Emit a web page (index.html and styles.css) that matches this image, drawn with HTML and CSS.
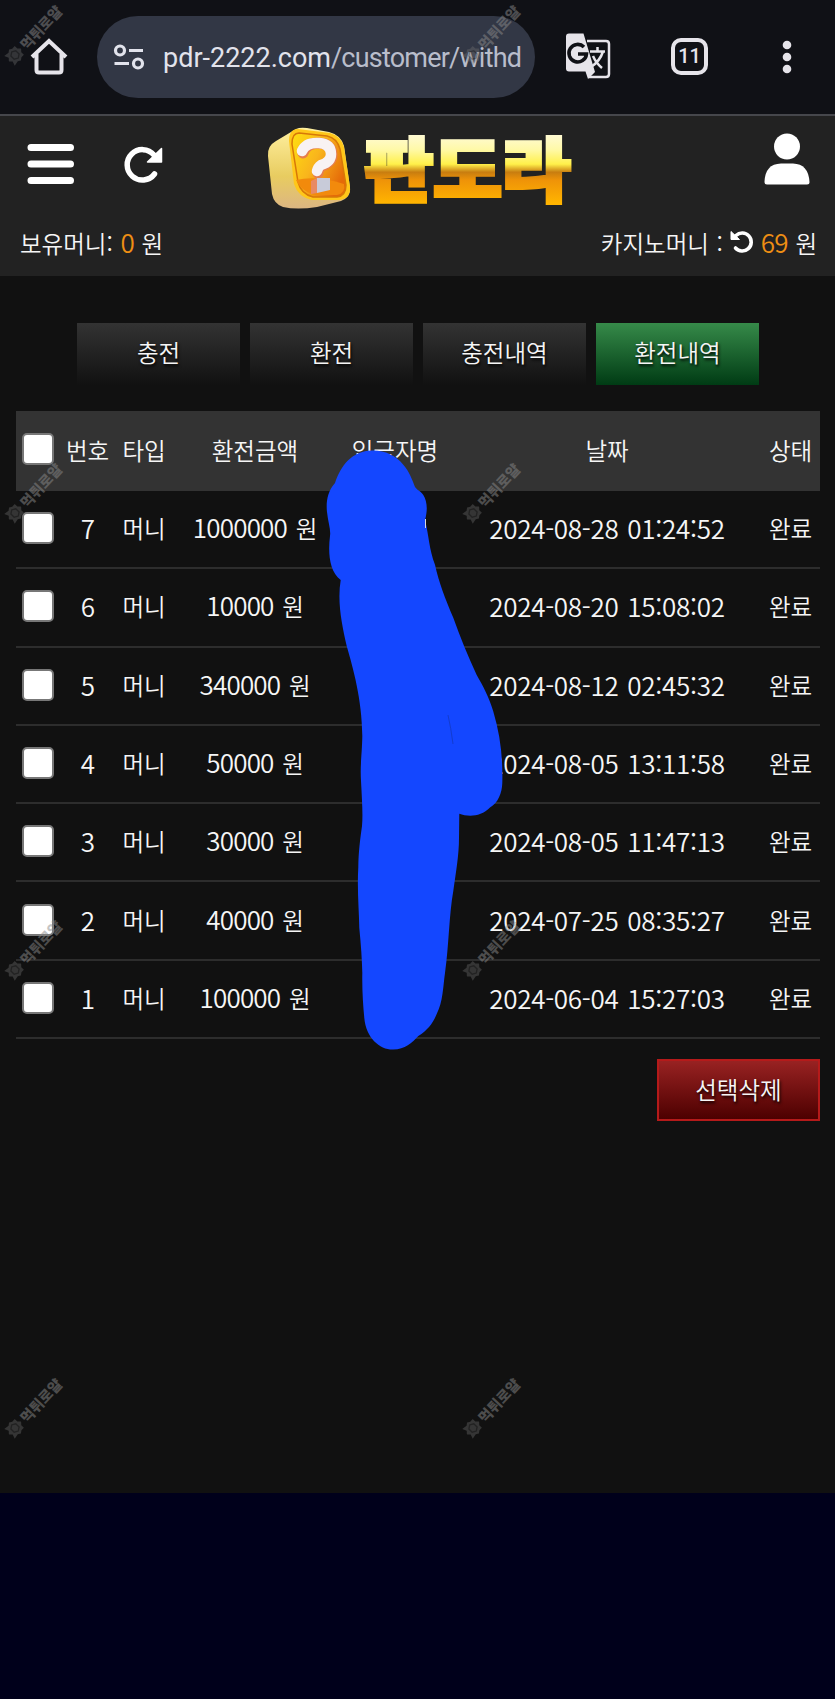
FILE: index.html
```html
<!DOCTYPE html>
<html lang="ko">
<head>
    <meta charset="UTF-8">
    <meta name="viewport" content="width=device-width, initial-scale=1.0">
    <title>환전내역</title>
    <link rel="stylesheet" href="styles.css">
</head>
<body>
    <div class="browser-bar">
        <svg class="home-icon" width="38" height="38" viewBox="0 0 38 38">
            <path d="M2 19 L19 3 L36 19 M6.5 16 V32 Q6.5 34.5 9 34.5 H29 Q31.500 34.5 31.500 32 V16" fill="none" stroke="#e6e4ea" stroke-width="4"/>
        </svg>
        <div class="address">
            <svg width="32" height="28" viewBox="0 0 32 28">
                <g fill="none" stroke="#e2e3ec" stroke-width="3.200">
                    <circle cx="7" cy="7.500" r="4.500"/>
                    <path d="M16 7.500 H30 M1.500 20.500 H16"/>
                    <circle cx="25" cy="20.500" r="4.500"/>
                </g>
            </svg>
            <div class="url">pdr-2222.com<span>/customer/withd</span></div>
        </div>
        <svg class="translate-icon" width="46" height="47" viewBox="0 0 46 47">
            <path d="M22 8 H41 Q44 8 44 11 V41 Q44 44 41 44 H24" fill="none" stroke="#e6e4ea" stroke-width="2.500"/>
            <path d="M25 18.500 H40 M32.500 14 V18.500 M38 18.500 Q35 28 26 34 M28 23 Q31 30 37 35" fill="none" stroke="#e6e4ea" stroke-width="2.500"/>
            <path d="M4 0.500 H18.500 L30 39 L23 46 L20.500 38.500 H4 Q1 38.500 1 35.500 V3.500 Q1 0.500 4 0.500 Z" fill="#e6e4ea"/>
            <path d="M19 14 A8.800 8.800 0 1 0 21.500 21 H13" fill="none" stroke="#101116" stroke-width="3.500"/>
        </svg>
        <div class="tab-count">11</div>
        <svg class="dots-icon" width="10" height="34" viewBox="0 0 10 34">
            <g fill="#e6e4ea">
                <circle cx="5" cy="5" r="4.300"/>
                <circle cx="5" cy="17" r="4.300"/>
                <circle cx="5" cy="29" r="4.300"/>
            </g>
        </svg>
    </div>

    <div class="header">
        <div class="header-top">
            <svg class="menu-icon" width="48" height="42" viewBox="0 0 48 42">
                <path d="M4 4.500 H43.500 M4 21 H43.500 M4 37.500 H43.500" stroke="#fff" stroke-width="7" stroke-linecap="round"/>
            </svg>
            <svg class="reload-icon" width="42" height="42" viewBox="0 0 42 42">
                <path d="M31.500 30 A15.200 15.200 0 1 1 31 11" fill="none" stroke="#fff" stroke-width="5.500" stroke-linecap="round"/>
                <path d="M38.500 4.500 V18 H24.500 Z" fill="#fff" stroke="#fff" stroke-width="1.500" stroke-linejoin="round"/>
            </svg>
            <svg class="logo" width="308" height="88" viewBox="0 0 308 88">
                <defs>
                    <linearGradient id="gold" x1="0" y1="9" x2="0" y2="76" gradientUnits="userSpaceOnUse">
                        <stop offset="0" stop-color="#fffad0"/>
                        <stop offset="0.2" stop-color="#fff9a8"/>
                        <stop offset="0.42" stop-color="#fff04a"/>
                        <stop offset="0.54" stop-color="#c87d10"/>
                        <stop offset="0.66" stop-color="#ef9308"/>
                        <stop offset="1" stop-color="#ffb400"/>
                    </linearGradient>
                    <linearGradient id="side" x1="0" y1="0" x2="0" y2="1">
                        <stop offset="0" stop-color="#fff0a0"/>
                        <stop offset="0.6" stop-color="#e8cc60"/>
                        <stop offset="1" stop-color="#dcb682"/>
                    </linearGradient>
                    <linearGradient id="face" x1="0" y1="0" x2="1" y2="0.6">
                        <stop offset="0" stop-color="#ffdf10"/>
                        <stop offset="0.5" stop-color="#f9b51c"/>
                        <stop offset="1" stop-color="#e56a08"/>
                    </linearGradient>
                </defs>
                <path d="M29 2 Q33 0 40 1 L62 5 Q74 8 77 19 L83 60 Q84 70 74 74 L50 80 Q30 83 16 80 Q7 77 5 67 L1 29 Q0 19 9 14 Z" fill="url(#side)"/>
                <path d="M31 2 L63 6 Q74 9 77 20 L83 60 Q84 72 72 73 L45 73 Q31 70 27 57 L22 14 Q22 2 31 2 Z" fill="#ffc71a"/>
                <path d="M32 6 L60 9 Q70 11 73 22 L79 58 Q79 69 70 70 L46 70 Q34 67 31 55 L25 17 Q25 6 32 6 Z" fill="url(#face)" stroke="#d77808" stroke-width="1.500"/>
                <path d="M29 53 Q50 48 77 57 Q79 66 70 68 L47 68 Q33 63 29 53 Z" fill="#f28a0c"/>
                <path d="M36 26 Q39 16 52 16 Q65 17 65 28 Q65 35 55 39 Q51 41 51 46" fill="none" stroke="#e67e4c" stroke-width="11" stroke-linecap="round"/>
                <path d="M35 24 Q39 15 52 16 Q64 17 64 27 Q64 35 54 38 Q51 40 50 44" fill="none" stroke="#f8f2f3" stroke-width="10.500" stroke-linecap="round"/>
                <path d="M44 54 L50 51 V66 L44 67 Z" fill="#e88a63"/>
                <path d="M50 51 H63 V63 L50 66 Z" fill="#c8cbd9"/>
                <text x="97.500" y="69" textLength="206" lengthAdjust="spacingAndGlyphs" class="logo-text" fill="url(#gold)" stroke="url(#gold)">판도라</text>
            </svg>
            <svg class="user-icon" width="46" height="52" viewBox="0 0 46 52">
                <circle cx="23" cy="13.500" r="13" fill="#fff"/>
                <path d="M0.500 49 Q1 31 17 30.500 H29 Q44.500 31 45.500 49 Q45.500 51.500 43 51.500 H3 Q0.500 51.500 0.500 49 Z" fill="#fff"/>
            </svg>
        </div>
        <div class="money">
            <div>보유머니: <span class="num amount">0</span> 원</div>
            <div class="casino">
                <span>카지노머니 :</span>
                <svg width="24" height="24" viewBox="0 0 24 24">
                    <path d="M6 5.500 A9 9 0 1 1 5.500 18" fill="none" stroke="#fff" stroke-width="3.600" stroke-linecap="round"/>
                    <path d="M1 1.500 V9.500 H9.500 Z" fill="#fff" stroke="#fff" stroke-linejoin="round"/>
                </svg>
                <span><span class="num amount">69</span> 원</span>
            </div>
        </div>
    </div>

    <div class="content">
        <div class="tabs">
            <a class="tab">충전</a>
            <a class="tab">환전</a>
            <a class="tab">충전내역</a>
            <a class="tab active">환전내역</a>
        </div>

        <div class="table-wrap">
            <table class="history">
                <colgroup>
                    <col class="col-check"><col class="col-no"><col class="col-type"><col class="col-amount"><col class="col-name"><col class="col-date"><col class="col-state">
                </colgroup>
                <thead>
                    <tr><th><input type="checkbox"></th><th>번호</th><th>타입</th><th>환전금액</th><th>입금자명</th><th>날짜</th><th>상태</th></tr>
                </thead>
                <tbody>
                    <tr><td><input type="checkbox"></td><td class="num">7</td><td>머니</td><td><span class="num">1000000</span> 원</td><td></td><td class="date">2024-08-28 01:24:52</td><td>완료</td></tr>
                    <tr><td><input type="checkbox"></td><td class="num">6</td><td>머니</td><td><span class="num">10000</span> 원</td><td></td><td class="date">2024-08-20 15:08:02</td><td>완료</td></tr>
                    <tr><td><input type="checkbox"></td><td class="num">5</td><td>머니</td><td><span class="num">340000</span> 원</td><td></td><td class="date">2024-08-12 02:45:32</td><td>완료</td></tr>
                    <tr><td><input type="checkbox"></td><td class="num">4</td><td>머니</td><td><span class="num">50000</span> 원</td><td></td><td class="date">2024-08-05 13:11:58</td><td>완료</td></tr>
                    <tr><td><input type="checkbox"></td><td class="num">3</td><td>머니</td><td><span class="num">30000</span> 원</td><td></td><td class="date">2024-08-05 11:47:13</td><td>완료</td></tr>
                    <tr><td><input type="checkbox"></td><td class="num">2</td><td>머니</td><td><span class="num">40000</span> 원</td><td></td><td class="date">2024-07-25 08:35:27</td><td>완료</td></tr>
                    <tr><td><input type="checkbox"></td><td class="num">1</td><td>머니</td><td><span class="num">100000</span> 원</td><td></td><td class="date">2024-06-04 15:27:03</td><td>완료</td></tr>
                </tbody>
            </table>
            <!-- marker stroke over the depositor names -->
            <svg class="marker" width="180" height="604" viewBox="325 448 180 604">
                <path d="M372 450.400 C352 451 341 465 335 483 C327 492 326 503 327 512 C328 522 331 530 330 536 C328 552 329 571 340.700 580 C337 602 342 625 346.700 646 C353 668 362 699 362.300 736 C362 755 360 765 361 781 C362 800 363 815 362 826 C360 840 358.500 852 358.300 867 C357 890 359 910 359.300 928 C361 945 362 960 362.300 973 C362 990 363 1005 364.300 1018 C366 1038 380 1050 393.300 1049.600 C405 1049 412 1043 418.300 1036 C428 1030 433 1023 436.700 1014 C443 1002 443 987 445 973 C449 945 449 915 453.300 891 C456 872 459 855 459 838 L459.300 813.700 C468 817 481 817 490 807.500 C498 803 502 793 502.300 783 C503 757 500 734 493.300 711.600 C489 697 483 686 476.700 675 C468 656 460 637 453.300 617.800 C445 598 439 583 435 564.700 C429 549 429 536 425 520 C428 509 427 501 423.300 495 C421 491 418 491 415 487 C412 479 409 471 403.300 464.700 C396 455 384 450 372 450.400 Z" fill="#1447ff"/>
                <path d="M448 715 Q451 728 453 744" fill="none" stroke="#133ccf" stroke-width="1"/>
                <path d="M425.500 519 V528" stroke="#d8d8e0" stroke-width="1"/>
            </svg>
        </div>

        <div class="actions">
            <button class="delete-button">선택삭제</button>
        </div>
    </div>

    <div class="bottom-bar"></div>

    <div class="watermarks">
        <div class="mark"></div>
        <div class="mark"></div>
        <div class="mark"></div>
        <div class="mark"></div>
        <div class="mark"></div>
        <div class="mark"></div>
        <div class="mark"></div>
        <div class="mark"></div>
    </div>

    <script>
        var marks = document.querySelectorAll('.mark');
        for (var i = 0; i < marks.length; i++) {
            marks[i].innerHTML = '<div class="mark-inner"><svg width="18" height="18" viewBox="0 0 20 20">' +
                '<path d="M10 1 L13 3 L17 3 L17 7 L20 10 L17 13 L17 17 L13 17 L10 19 L7 17 L1 18 L3 13 L0 10 L3 7 L1 2 L7 3 Z" fill="#777" opacity="0.7"/>' +
                '<path d="M10 5 L14 7.5 V12.5 L10 15 L6 12.5 V7.5 Z" fill="none" stroke="#333" stroke-width="1.5"/>' +
                '</svg><span>먹튀로얄</span></div>';
        }
    </script>
</body>
</html>
```
FILE: styles.css
```css
* {
    box-sizing: border-box;
}

body {
    position: relative;
    display: flex;
    flex-direction: column;
    height: 1699px;
    margin: 0;
    overflow: hidden;
    background-color: #111111;
    color: #f6f6f6;
    font-family: "Noto Sans CJK KR", sans-serif;
    font-size: 23.5px;
    font-weight: 350;
    line-height: 32px;
}

svg {
    display: block;
    flex: none;
}

.browser-bar {
    display: flex;
    align-items: center;
    height: 116px;
    padding: 0 0 1px 30px;
    background-color: #101116;
    border-bottom: 2px solid #46474c;
    color: #e6e4ea;
    font-family: Roboto, sans-serif;
}

.address {
    display: flex;
    align-items: center;
    gap: 18px;
    width: 438px;
    height: 82px;
    margin-left: 29px;
    padding: 0 16px;
    border-radius: 41px;
    background-color: #323745;
}

.url {
    padding-top: 2px;
    white-space: nowrap;
    font-size: 27px;
    font-weight: 400;
    color: #e2e3ec;
}

.url span {
    letter-spacing: -0.8px;
    color: #b9bdcb;
}

.translate-icon {
    margin-left: 30px;
}

.tab-count {
    width: 37px;
    height: 37px;
    margin-left: 60px;
    border: 4px solid #e6e4ea;
    border-radius: 10px;
    font-size: 20px;
    font-weight: 500;
    line-height: 29px;
    text-align: center;
}

.dots-icon {
    margin-left: 74px;
}

.header {
    height: 160px;
    padding: 11px 18px 0 20px;
    background-color: #222222;
}

.header-top {
    display: flex;
    align-items: flex-start;
    height: 98px;
}

.menu-icon {
    margin: 16px 0 0 7px;
}

.reload-icon {
    margin: 17px 0 0 48px;
}

.logo {
    margin-left: 102px;
    overflow: visible;
}

.logo-text {
    font-family: "Noto Sans CJK KR", sans-serif;
    font-size: 69px;
    font-weight: 900;
    stroke-width: 4px;
}

.user-icon {
    margin: 6px 0 0 189px;
}

.money {
    display: flex;
    justify-content: space-between;
    margin-top: 2px;
    word-spacing: 1px;
}

.num {
    font-size: 26px;
    letter-spacing: -0.8px;
    line-height: 1;
}

.amount {
    color: #ef8f14;
}

.casino {
    display: flex;
    gap: 7px;
}

.casino svg {
    margin-top: 3px;
}

.content {
    height: 1217px;
    padding: 47px 15px 0 16px;
}

.tabs {
    display: flex;
    justify-content: center;
    gap: 10px;
    height: 62px;
    margin-bottom: 26px;
}

.tab {
    width: 163px;
    height: 62px;
    background: linear-gradient(#333333, #111111);
    line-height: 58px;
    text-align: center;
    text-shadow: 1px 2px 3px #000000;
}

.tab.active {
    background: linear-gradient(#368a49, #003b14);
}

.table-wrap {
    position: relative;
}

.history {
    width: 804px;
    table-layout: fixed;
    border-collapse: separate;
    border-spacing: 0;
    text-align: center;
    white-space: nowrap;
    word-spacing: 2px;
}

.col-check { width: 44px; }
.col-no { width: 55px; }
.col-type { width: 58px; }
.col-amount { width: 164px; }
.col-name { width: 116px; }
.col-date { width: 308px; }
.col-state { width: 59px; }

.history th {
    height: 80px;
    padding: 0 0 3px;
    background-color: #333333;
    font-weight: 350;
}

.history td {
    height: 78.3px;
    padding: 0 0 2px;
    border-bottom: 2px solid #2d2d2d;
}

.history .date {
    font-size: 26px;
    letter-spacing: -0.3px;
}

.history input {
    appearance: none;
    display: block;
    width: 32px;
    height: 32px;
    margin: 0 0 2px 6px;
    border: 2px solid #777777;
    border-radius: 5px;
    background-color: #ffffff;
}

.history td input {
    margin-bottom: 0;
}

.marker {
    position: absolute;
    left: 309px;
    top: 37px;
}

.actions {
    display: flex;
    justify-content: flex-end;
    margin-top: 20px;
}

.delete-button {
    width: 163px;
    height: 62px;
    padding: 0 0 3px;
    border: 2px solid #b51a1a;
    background: linear-gradient(#982222, #4d0000);
    color: #f6f6f6;
    font: inherit;
    text-shadow: 1px 2px 3px #000000;
}

.bottom-bar {
    flex: 1;
    background-color: #00001b;
}

/* repeated stamp laid over the whole page */
.watermarks {
    position: absolute;
    top: 0;
    left: 0;
    width: 835px;
    height: 1699px;
    display: grid;
    grid-template-columns: 458px 377px;
    grid-template-rows: 457.7px 457.7px 457.7px 325px;
    overflow: hidden;
    pointer-events: none;
}

.mark {
    padding: 45px 0 0 6px;
}

.mark-inner {
    display: flex;
    align-items: center;
    gap: 2px;
    width: 76px;
    height: 20px;
    transform: rotate(-47deg);
    transform-origin: 9px 10px;
    color: #8a8a8a;
    opacity: 0.5;
    font-family: "Noto Sans CJK KR", sans-serif;
    font-size: 14.5px;
    font-weight: 900;
    line-height: 20px;
}
```
